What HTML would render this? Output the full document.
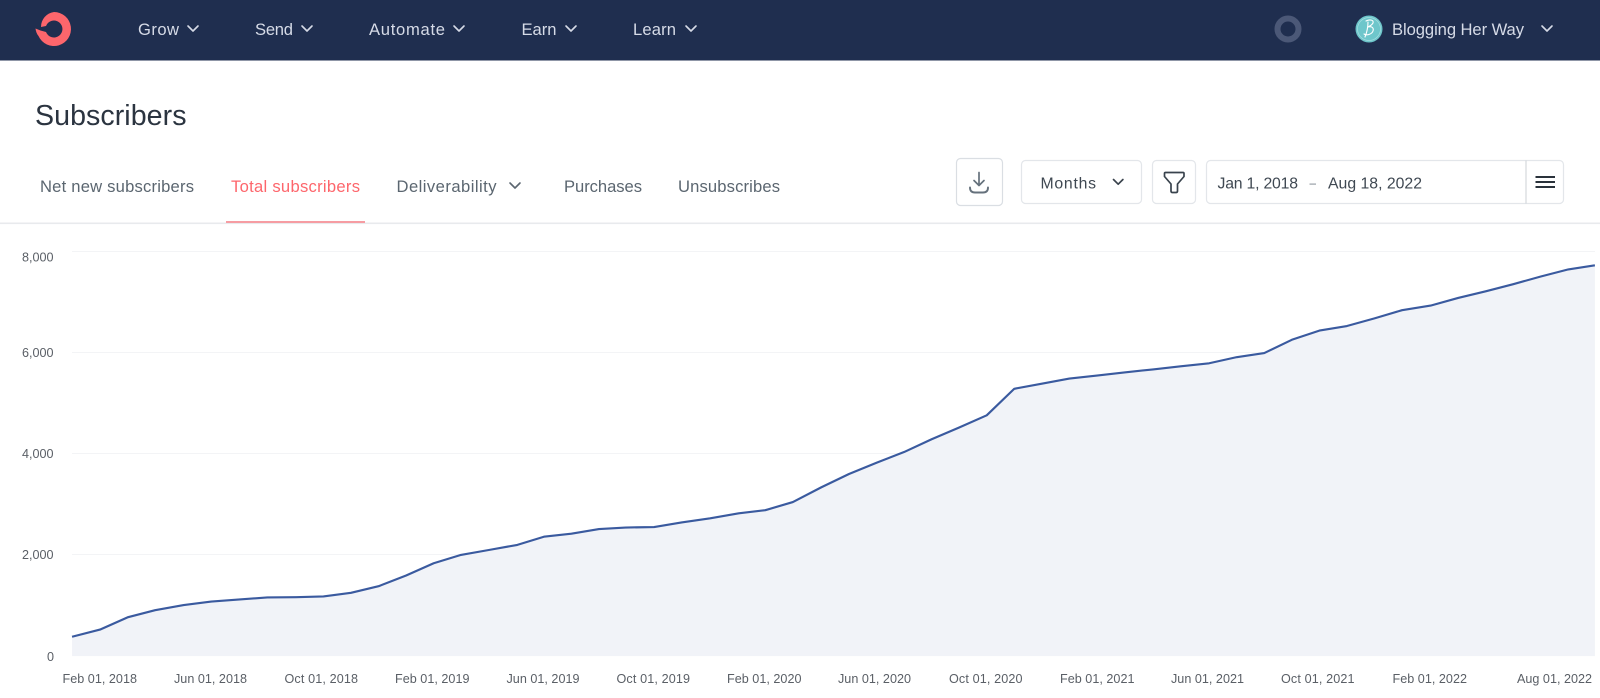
<!DOCTYPE html>
<html lang="en">
<head>
<meta charset="utf-8">
<title>Subscribers</title>
<style>
html,body{margin:0;padding:0;background:#fff;width:1600px;height:698px;overflow:hidden}
svg{display:block;font-family:"Liberation Sans",Arial,sans-serif}
.nav{fill:#d6dbe7;font-size:16.6px}
.tab{fill:#5b6670;font-size:16.6px}
.ctl{fill:#3f4852;font-size:15.8px}
.ax{fill:#5a5f66;font-size:12.6px}
.box{fill:#fff;stroke:#e3e6ea;stroke-width:1.2}
.chev{fill:none;stroke-width:1.6;stroke-linecap:round;stroke-linejoin:round}
.grid{stroke:#f3f4f6;stroke-width:1}
</style>
</head>
<body>
<svg width="1600" height="698" viewBox="0 0 1600 698" xmlns="http://www.w3.org/2000/svg">
<!-- nav -->
<rect x="0" y="0" width="1600" height="60.5" fill="#1f2e4f"/>
<path d="M35.5 28.5L40.5 30.500L46 32A8.500 8.500 0 1 0 46 26L41 27A15 15 0 0 1 54 12A17 17 0 1 1 38.500 36Q36 33 35.500 28.500Z" fill="#fd666c"/>
<text class="nav" x="138" y="35" textLength="41" lengthAdjust="spacing">Grow</text>
<path class="chev" stroke="#d6dbe7" d="M188 26l5 5 5-5"/>
<text class="nav" x="255" y="35" textLength="38" lengthAdjust="spacing">Send</text>
<path class="chev" stroke="#d6dbe7" d="M302 26l5 5 5-5"/>
<text class="nav" x="369" y="35" textLength="76" lengthAdjust="spacing">Automate</text>
<path class="chev" stroke="#d6dbe7" d="M454 26l5 5 5-5"/>
<text class="nav" x="521.5" y="35" textLength="35" lengthAdjust="spacing">Earn</text>
<path class="chev" stroke="#d6dbe7" d="M566 26l5 5 5-5"/>
<text class="nav" x="633" y="35" textLength="43" lengthAdjust="spacing">Learn</text>
<path class="chev" stroke="#d6dbe7" d="M686 26l5 5 5-5"/>
<circle cx="1288" cy="29" r="10.500" fill="none" stroke="#4b5877" stroke-width="6"/>
<circle cx="1369" cy="29" r="13.500" fill="#6ec6cb"/>
<circle cx="1369" cy="29" r="11.500" fill="none" stroke="#a5dee0" stroke-width=".7"/>
<path d="M1366 21c4-2 8-1 7 2-1 2-3 3-5 4 4-1 6 1 5 4-1 3-6 5-9 3M1368 22c0 5-1 10-3 15" fill="none" stroke="#fff" stroke-width="1.100" stroke-linecap="round"/>
<text class="nav" x="1392" y="35" textLength="132" lengthAdjust="spacing">Blogging Her Way</text>
<path class="chev" stroke="#d6dbe7" d="M1542 26l5 5 5-5"/>

<!-- title -->
<text x="35" y="125" font-size="28.600" fill="#2b3440" textLength="151.500" lengthAdjust="spacing">Subscribers</text>

<!-- tabs -->
<text class="tab" x="40" y="192" textLength="154" lengthAdjust="spacing">Net new subscribers</text>
<text class="tab" x="231" y="192" textLength="129" lengthAdjust="spacing" style="fill:#fd666c">Total subscribers</text>
<text class="tab" x="396.500" y="192" textLength="100" lengthAdjust="spacing">Deliverability</text>
<path class="chev" stroke="#5b6670" d="M510 183l5 5 5-5"/>
<text class="tab" x="564" y="192" textLength="78" lengthAdjust="spacing">Purchases</text>
<text class="tab" x="678" y="192" textLength="102" lengthAdjust="spacing">Unsubscribes</text>
<rect x="0" y="222.500" width="1600" height="1.600" fill="#e8eaed"/>
<rect x="226" y="221" width="139" height="2" fill="#f69ca2"/>

<!-- controls -->
<rect class="box" x="956.500" y="158.500" width="46" height="47" rx="4" style="stroke:#dadee3"/>
<path d="M979 172.500v13M974 180.500l5 5 5-5" fill="none" stroke="#65717c" stroke-width="1.700" stroke-linecap="round" stroke-linejoin="round"/>
<path d="M970 187.500q0 5 5 5h8q5 0 5-5" fill="none" stroke="#65717c" stroke-width="1.900" stroke-linecap="round"/>
<rect class="box" x="1021.500" y="160.500" width="120" height="43" rx="4"/>
<text class="ctl" x="1040.500" y="188.500" textLength="55.500" lengthAdjust="spacing">Months</text>
<path d="M1113.500 179.500l4.700 4.700 4.700-4.700" fill="none" stroke="#3a434d" stroke-width="1.700" stroke-linecap="round" stroke-linejoin="round"/>
<rect class="box" x="1152.500" y="160.500" width="43" height="43" rx="4"/>
<path d="M1164.500 173.500q0-1 1-1h17.500q1 0 1 1v3l-6.500 7.500v7q0 1.500-1.500 1.500h-3.500q-1.500 0-1.500-1.500v-7l-6.500-7.500z" fill="none" stroke="#39434d" stroke-width="1.700" stroke-linejoin="round"/>
<rect class="box" x="1206.500" y="160.500" width="357" height="43" rx="4"/>
<rect x="1525.500" y="160.500" width="1" height="43" fill="#ccd1d6"/>
<text class="ctl" x="1217.500" y="188.500" textLength="80.500" lengthAdjust="spacing">Jan 1, 2018</text>
<rect x="1309.500" y="183.500" width="6.500" height="1.200" fill="#9aa1a8"/>
<text class="ctl" x="1328" y="188.500" textLength="94" lengthAdjust="spacing">Aug 18, 2022</text>
<path d="M1535.500 177h19.500M1535.500 182h19.500M1535.500 187h19.500" stroke="#2a323b" stroke-width="2.100" fill="none"/>

<!-- chart grid -->
<line class="grid" x1="72" x2="1595" y1="251.500" y2="251.500"/>
<line class="grid" x1="72" x2="1595" y1="352.500" y2="352.500"/>
<line class="grid" x1="72" x2="1595" y1="453.500" y2="453.500"/>
<line class="grid" x1="72" x2="1595" y1="554.500" y2="554.500"/>

<!-- chart -->
<g transform="scale(1.0204)">
<path fill="#f1f3f8" d="M70.600 624 L98 617 L125 605 L152 598 L180 593 L207 589.500 L235 587.500 L262 585.500 L290 585.200 L317 584.500 L344 581 L371 574.500 L398 564 L425 552 L451 544 L479 539 L507 534 L533 526 L560 523 L587 518.500 L613 517 L641 516.500 L668 512 L696 508 L724 503 L750 500 L777 492 L805 477.500 L832 464.500 L859 453.500 L886 443 L913 430.500 L940 419 L967 407 L994 381 L1021 376 L1048 371 L1075 368 L1102 365 L1130 362 L1157 359 L1185 356 L1212 350 L1239 346 L1266 333 L1293 324 L1320 319.500 L1347 312 L1374 304 L1402 299.500 L1429 292 L1456 285.500 L1483 278.500 L1510 271 L1537 264 L1563 260 L1563 643 L70.600 643 Z"/>
<polyline fill="none" stroke="#3a5a9f" stroke-width="2.100" stroke-linejoin="round" points="70.600,624 98,617 125,605 152,598 180,593 207,589.500 235,587.500 262,585.500 290,585.200 317,584.500 344,581 371,574.500 398,564 425,552 451,544 479,539 507,534 533,526 560,523 587,518.500 613,517 641,516.500 668,512 696,508 724,503 750,500 777,492 805,477.500 832,464.500 859,453.500 886,443 913,430.500 940,419 967,407 994,381 1021,376 1048,371 1075,368 1102,365 1130,362 1157,359 1185,356 1212,350 1239,346 1266,333 1293,324 1320,319.500 1347,312 1374,304 1402,299.500 1429,292 1456,285.500 1483,278.500 1510,271 1537,264 1563,260"/>
</g>

<!-- y axis -->
<text class="ax" x="22" y="261.500" textLength="31.500">8,000</text>
<text class="ax" x="22" y="357" textLength="31.500">6,000</text>
<text class="ax" x="22" y="458" textLength="31.500">4,000</text>
<text class="ax" x="22" y="559" textLength="31.500">2,000</text>
<text class="ax" x="47" y="661" textLength="6.500">0</text>

<!-- x axis -->
<text class="ax" x="62.500" y="683" textLength="74.500">Feb 01, 2018</text>
<text class="ax" x="174" y="683" textLength="73">Jun 01, 2018</text>
<text class="ax" x="284.500" y="683" textLength="73.500">Oct 01, 2018</text>
<text class="ax" x="395" y="683" textLength="74.500">Feb 01, 2019</text>
<text class="ax" x="506.500" y="683" textLength="73">Jun 01, 2019</text>
<text class="ax" x="616.500" y="683" textLength="73.500">Oct 01, 2019</text>
<text class="ax" x="727" y="683" textLength="74.500">Feb 01, 2020</text>
<text class="ax" x="838" y="683" textLength="73">Jun 01, 2020</text>
<text class="ax" x="949" y="683" textLength="73.500">Oct 01, 2020</text>
<text class="ax" x="1060" y="683" textLength="74.500">Feb 01, 2021</text>
<text class="ax" x="1171" y="683" textLength="73">Jun 01, 2021</text>
<text class="ax" x="1281" y="683" textLength="73.500">Oct 01, 2021</text>
<text class="ax" x="1392.500" y="683" textLength="74.500">Feb 01, 2022</text>
<text class="ax" x="1517" y="683" textLength="75">Aug 01, 2022</text>
</svg>
</body>
</html>
